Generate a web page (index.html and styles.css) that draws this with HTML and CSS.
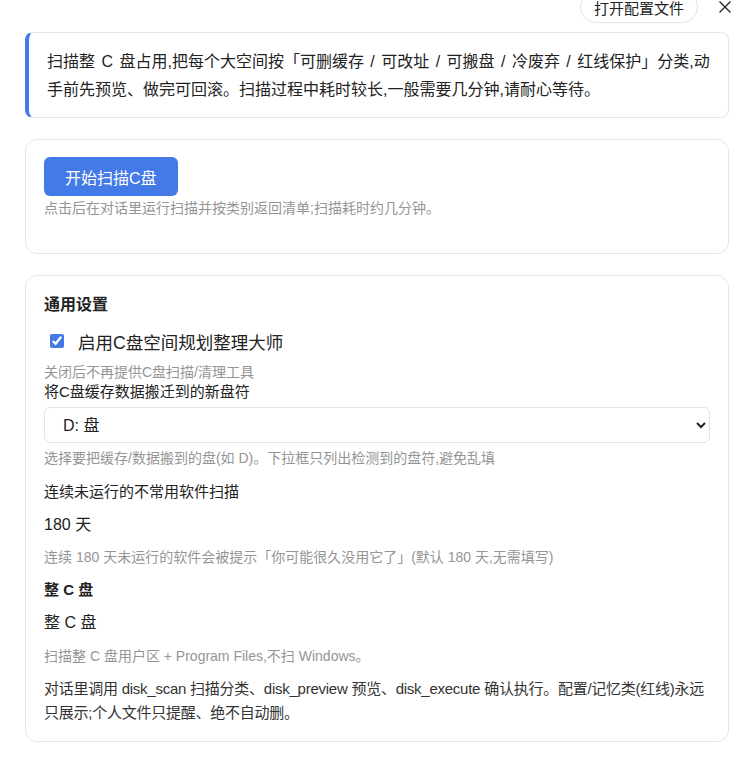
FILE: index.html
```html
<!DOCTYPE html>
<html lang="zh-CN">
<head>
    <meta charset="UTF-8">
    <meta name="viewport" content="width=device-width, initial-scale=1.0">
    <title>C盘空间规划整理大师</title>
    <link rel="stylesheet" href="styles.css">
</head>
<body>

    <div class="panel">
        <div class="toolbar">
            <button class="pill">打开配置文件</button>
            <button class="close" aria-label="关闭">
                <svg width="14" height="14" viewBox="0 0 14 14">
                    <path d="M1.5 1.5 L12.5 12.5 M12.5 1.5 L1.5 12.5" stroke="#222" stroke-width="1.3" fill="none"/>
                </svg>
            </button>
        </div>

        <div class="intro">
            扫描整 C 盘占用,把每个大空间按「可删缓存 / 可改址 / 可搬盘 / 冷废弃 / 红线保护」分类,动手前先预览、做完可回滚。扫描过程中耗时较长,一般需要几分钟,请耐心等待。
        </div>

        <div class="card scan">
            <button class="primary">开始扫描C盘</button>
            <p class="hint">点击后在对话里运行扫描并按类别返回清单;扫描耗时约几分钟。</p>
        </div>

        <div class="card settings">
            <h3>通用设置</h3>
            <label class="check">
                <input type="checkbox" checked>
                <span>启用C盘空间规划整理大师</span>
            </label>
            <p class="hint tight">关闭后不再提供C盘扫描/清理工具</p>

            <p class="label">将C盘缓存数据搬迁到的新盘符</p>
            <select class="drive">
                <option>D: 盘</option>
                <option>E: 盘</option>
            </select>
            <p class="hint">选择要把缓存/数据搬到的盘(如 D)。下拉框只列出检测到的盘符,避免乱填</p>

            <p class="label spaced">连续未运行的不常用软件扫描</p>
            <p class="value">180 天</p>
            <p class="hint">连续 180 天未运行的软件会被提示「你可能很久没用它了」(默认 180 天,无需填写)</p>

            <p class="label spaced strong">整 C 盘</p>
            <p class="value">整 C 盘</p>
            <p class="hint loose">扫描整 C 盘用户区 + Program Files,不扫 Windows。</p>

            <p class="note">对话里调用 disk_scan 扫描分类、disk_preview 预览、disk_execute 确认执行。配置/记忆类(红线)永远只展示;个人文件只提醒、绝不自动删。</p>
        </div>
    </div>

</body>
</html>
```

FILE: styles.css
```css
* {
  margin: 0;
  padding: 0;
  box-sizing: border-box;
}
body {
    font-family: "Segoe UI", "Liberation Sans", "Noto Sans CJK SC", sans-serif;
    background: #fff;
    color: #222;
    overflow: hidden;
}
.panel {
    padding: 0 23px 0 25px;
    display: flex;
    flex-direction: column;
    gap: 21px;
}
.toolbar {
    display: flex;
    justify-content: flex-end;
    align-items: center;
    gap: 20px;
    height: 32px;
    margin-top: -9px;
    margin-bottom: -12px;
}
.pill {
    height: 32px;
    padding: 0 13px;
    border: 1px solid #e3e3e3;
    border-radius: 16px;
    background: #fff;
    font: inherit;
    font-size: 15px;
    color: #222;
}
.close {
    border: none;
    background: none;
    width: 14px;
    height: 14px;
    display: flex;
    margin-right: -3px;
}
.intro {
    border: 1px solid #e6e6e6;
    border-left: 4px solid #4479e8;
    border-radius: 8px;
    padding: 15px 18px 13px 18px;
    font-size: 16px;
    line-height: 28px;
    word-spacing: 2px;
}
.card {
    border: 1px solid #e6e6e6;
    border-radius: 12px;
    padding: 17px 18px 16px 18px;
}
.scan {
    padding-bottom: 35px;
}
.primary {
    display: block;
    height: 39px;
    padding: 0 21px;
    border: none;
    border-radius: 6px;
    background: #4479e8;
    color: #fff;
    font: inherit;
    font-size: 16px;
}
.hint {
    font-size: 14px;
    line-height: 20px;
    color: #959595;
    margin-top: 2px;
}
.settings .hint {
    margin-top: 5px;
}
.settings .hint.tight {
    margin-top: 9px;
}
h3 {
    font-size: 16px;
    font-weight: bold;
    line-height: 24px;
}
.check {
    display: flex;
    align-items: center;
    margin-top: 12px;
    height: 24px;
    font-size: 17.5px;
}
.check input {
    width: 14px;
    height: 14px;
    margin: 0 14px 0 6px;
    accent-color: #4479e8;
}
.label {
    font-size: 15px;
    line-height: 20px;
}
.label.spaced {
    margin-top: 14px;
}
.label.strong {
    font-weight: bold;
    margin-top: 13px;
}
.drive {
    display: block;
    width: 100%;
    height: 36px;
    margin-top: 5px;
    padding: 0 14px;
    border: 1px solid #e3e3e3;
    border-radius: 6px;
    background: #fff;
    font: inherit;
    font-size: 16px;
    color: #222;
}
.value {
    font-size: 16px;
    line-height: 22px;
    margin-top: 12px;
}
.settings .value + .hint {
    margin-top: 11px;
}
.settings .value + .hint.loose {
    margin-top: 12px;
}
.note {
    font-size: 15px;
    line-height: 24px;
    margin-top: 11px;
    color: #333;
    letter-spacing: -0.25px;
}
```
